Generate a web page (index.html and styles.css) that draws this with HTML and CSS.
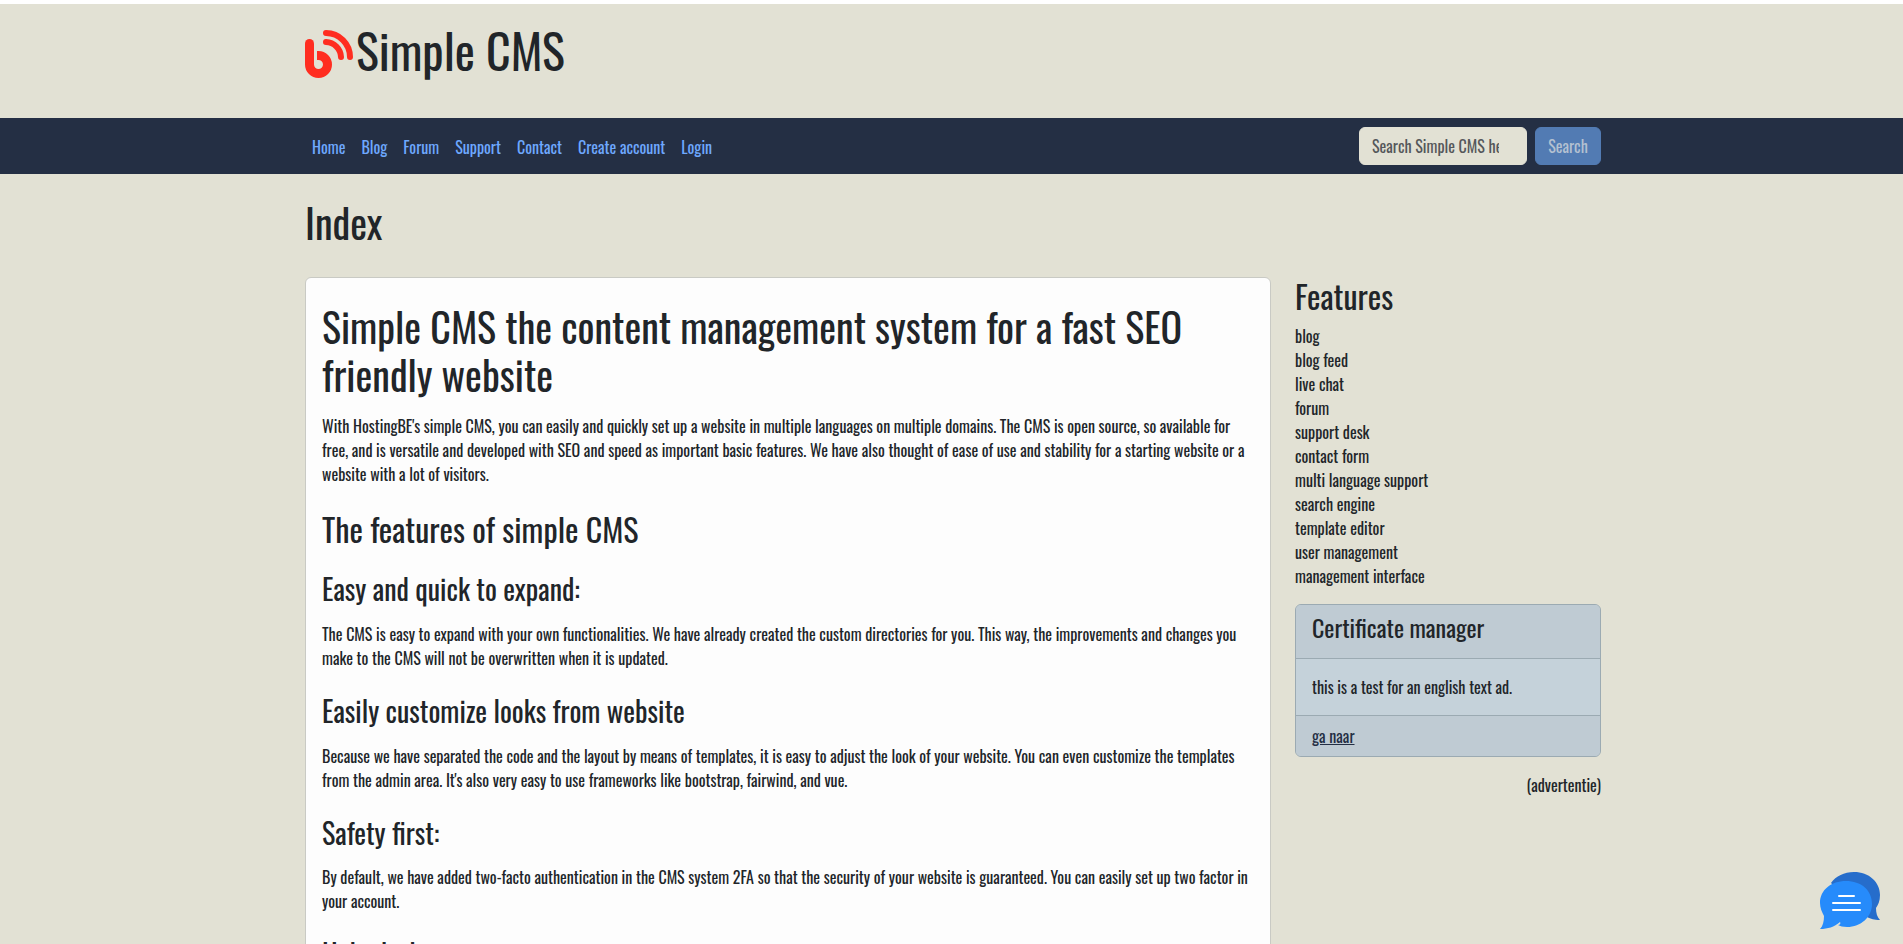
FILE: index.html
```html
<!DOCTYPE html>
<html lang="en">
<head>
<meta charset="utf-8">
<meta name="viewport" content="width=device-width, initial-scale=1">
<title>Simple CMS</title>
<link rel="stylesheet" href="styles.css">
</head>
<body>
<header class="site-header">
  <div class="container brand">
    <svg class="brand-logo" viewBox="0 0 48 48" aria-hidden="true">
      <g fill="none" stroke="#ff2d20">
        <path d="M4.500 13.500V30" stroke-width="9" stroke-linecap="round"/>
        <path d="M4.500 28V34.500A9 9 0 1 0 13.500 25.500H12" stroke-width="9"/>
        <path d="M21 12A15.500 15.500 0 0 1 36 27M21 3A24 24 0 0 1 45 27" stroke-width="6" stroke-linecap="round"/>
      </g>
    </svg>
    <span class="brand-name">Simple CMS</span>
  </div>
</header>
<nav class="navbar">
  <div class="container navbar-row">
    <ul class="nav-links">
      <li><a href="#">Home</a></li>
      <li><a href="#">Blog</a></li>
      <li><a href="#">Forum</a></li>
      <li><a href="#">Support</a></li>
      <li><a href="#">Contact</a></li>
      <li><a href="#">Create account</a></li>
      <li><a href="#">Login</a></li>
    </ul>
    <form class="search">
      <input class="search-input" type="search" placeholder="Search Simple CMS here" aria-label="Search">
      <button class="search-button" type="button">Search</button>
    </form>
  </div>
</nav>
<main class="container">
  <h1 class="page-title">Index</h1>
  <div class="columns">
    <article class="card">
      <h1>Simple CMS the content management system for a fast SEO friendly website</h1>
      <p>With HostingBE's simple CMS, you can easily and quickly set up a website in multiple languages on multiple domains. The CMS is open source, so available for free, and is versatile and developed with SEO and speed as important basic features. We have also thought of ease of use and stability for a starting website or a website with a lot of visitors.</p>
      <h2>The features of simple CMS</h2>
      <h3>Easy and quick to expand:</h3>
      <p>The CMS is easy to expand with your own functionalities. We have already created the custom directories for you. This way, the improvements and changes you make to the CMS will not be overwritten when it is updated.</p>
      <h3>Easily customize looks from website</h3>
      <p>Because we have separated the code and the layout by means of templates, it is easy to adjust the look of your website. You can even customize the templates from the admin area. It's also very easy to use frameworks like bootstrap, fairwind, and vue.</p>
      <h3>Safety first:</h3>
      <p>By default, we have added two-facto authentication in the CMS system 2FA so that the security of your website is guaranteed. You can easily set up two factor in your account.</p>
      <h3>Help desk:</h3>
    </article>
    <aside class="sidebar">
      <h2>Features</h2>
      <ul class="features">
        <li>blog</li>
        <li>blog feed</li>
        <li>live chat</li>
        <li>forum</li>
        <li>support desk</li>
        <li>contact form</li>
        <li>multi language support</li>
        <li>search engine</li>
        <li>template editor</li>
        <li>user management</li>
        <li>management interface</li>
      </ul>
      <section class="ad">
        <h3 class="ad-title">Certificate manager</h3>
        <p class="ad-body">this is a test for an english text ad.</p>
        <div class="ad-footer"><a href="#">ga naar</a></div>
      </section>
      <p class="ad-note">(advertentie)</p>
    </aside>
  </div>
</main>
<button class="chat" type="button" aria-label="Open chat">
  <svg viewBox="0 0 60 60" aria-hidden="true">
    <path fill="#266dcb" d="M11 12C16 5 24 1 34 1C49 1 60 11 60 24C60 30 58 34 56 37C56 42 57 46 60 49C54 49 51 48 47 46Z"/>
    <path fill="#268bfb" d="M26 10C41 10 52 19 52 33C52 46 41 56 27 56C23 56 20 55 18 54C20 54 21 52 20 51C14 56 8 58 0 58C3 55 4 50 4 45C2 41 0 37 0 32C0 19 11 10 26 10Z"/>
    <path stroke="#fff" stroke-width="2" stroke-linecap="round" d="M19 25H34M13 32H40M13 39H40"/>
  </svg>
</button>
</body>
</html>
```
FILE: styles.css
```css
* {
  box-sizing: border-box;
}

html {
  background: #e2e1d4;
}

body {
  margin: 0;
  height: 100vh;
  overflow: hidden;
  border-top: 4px solid #fff;
  background: #e2e1d4;
  color: #212529;
  font-family: Oswald, "Liberation Sans Narrow", Roboto, sans-serif;
  font-size: 16px;
  line-height: 24px;
}

h1, h2, h3, p, ul {
  margin: 0;
  padding: 0;
  font-weight: 400;
  line-height: 1.2;
}

h1 {
  font-size: 40px;
}

h2 {
  font-size: 32px;
}

h3 {
  font-size: 28px;
}

p, ul {
  line-height: 24px;
}

ul {
  list-style: none;
}

.container {
  max-width: 1323px;
  margin: 0 auto;
  padding: 0 12px 0 15px;
}

.site-header {
  padding: 17px 0 39px;
}

.brand {
  display: flex;
  align-items: center;
  gap: 3px;
}

.brand-logo {
  width: 48px;
  height: 48px;
  margin-top: 8px;
}

.brand-name {
  font-size: 48px;
  line-height: 58px;
}

.navbar {
  padding: 9px 0;
  background: #242f44;
}

.navbar-row {
  display: flex;
  align-items: center;
  justify-content: space-between;
}

.nav-links {
  display: flex;
  gap: 16px;
  padding: 2px 0 0 7px;
}

.nav-links a {
  color: #6ea8fe;
  text-decoration: none;
}

.search {
  display: flex;
  gap: 8px;
}

.search-input,
.search-button {
  height: 38px;
  padding: 0 12px;
  border: 1px solid #e2e1d4;
  border-radius: 6px;
  font: inherit;
}

.search-input {
  width: 168px;
  background: #e2e1d4;
}

.search-input::placeholder {
  color: #55575a;
  opacity: 1;
}

.search-button {
  width: 66px;
  border-color: #527bb3;
  background: #527bb3;
  color: #b4c1d1;
}

.page-title {
  padding: 24px 0 31px;
}

.columns {
  display: grid;
  grid-template-columns: minmax(0, 966fr) minmax(0, 306fr);
  gap: 24px;
  align-items: start;
}

.card {
  padding: 24px 16px;
  border: 1px solid #c9cac4;
  border-radius: 6px;
  background: #fdfdfd;
}

.card p {
  margin: 16px 0 24px;
}

.card h2 {
  margin-bottom: 24px;
}

.features {
  padding: 9px 0 16px;
}

.ad {
  border: 1px solid #9baab2;
  border-radius: 6px;
  background: #c5d2da;
  overflow: hidden;
}

.ad-title,
.ad-footer {
  padding: 8px 16px;
  background: #bfcbd3;
}

.ad-title {
  padding-bottom: 16px;
  font-size: 24px;
}

.ad-body {
  padding: 16px;
  border: solid #9baab2;
  border-width: 1px 0;
}

.ad-footer a {
  color: #242f44;
}

.ad-note {
  padding-top: 16px;
  text-align: right;
}

.chat {
  position: fixed;
  right: 23px;
  bottom: 13px;
  width: 60px;
  height: 60px;
  padding: 0;
  border: 0;
  background: none;
}
```
